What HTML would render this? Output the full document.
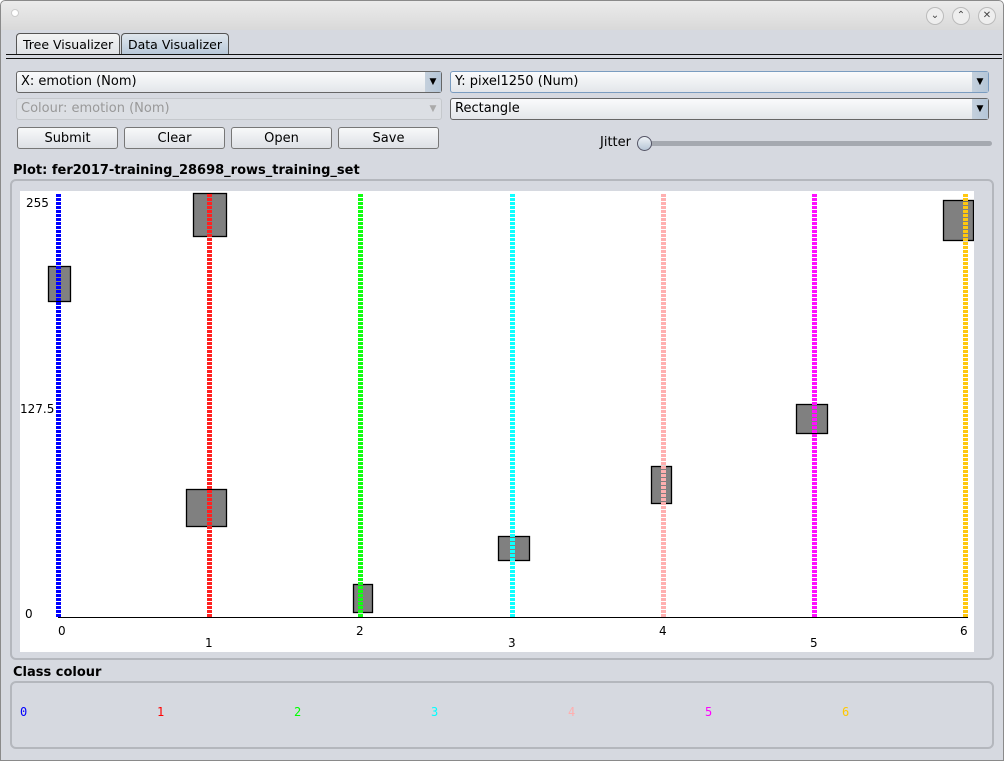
<!DOCTYPE html>
<html><head><style>
body{margin:0;width:1004px;height:761px;overflow:hidden;background:#fff;font-family:"DejaVu Sans","Liberation Sans",sans-serif;font-size:13px;}
.win{position:absolute;left:0;top:0;width:1004px;height:761px;border-radius:5px 5px 0 0;background:#d6d9e0;overflow:hidden}
.title{position:absolute;left:0;top:0;width:1004px;height:30px;background:linear-gradient(#ececec,#d9d9d9);}
.c{position:absolute;left:0;top:1px;width:1004px;height:760px}
.frame{position:absolute;left:0;top:0;width:1002px;height:759px;border:1px solid #8a8a8a;border-radius:5px 5px 0 0}
.cbtn{position:absolute;top:6px;width:16px;height:16px;border-radius:50%;border:1px solid #bbb;background:#eee;font-size:10px;text-align:center;line-height:16px;color:#444}
.tab{position:absolute;top:32px;height:20px;border:1px solid #555;border-bottom:none;border-radius:4px 4px 0 0;padding:0 6px;line-height:21px;font-size:12.5px}
.combo{position:absolute;height:22px;border:1px solid #666;border-radius:3px;background:linear-gradient(#fafbfc,#e3e6ea);box-sizing:border-box;line-height:20px;padding-left:4px;font-size:13px}
.combo .ar{position:absolute;right:0;top:0;width:16px;height:20px;background:linear-gradient(90deg,#c4d0dc,#b5c6d8);font-size:9px;text-align:center;line-height:20px}
.btn{position:absolute;top:126px;height:22px;width:101px;border:1px solid #777;border-radius:3px;background:linear-gradient(#f8f9fa,#dde0e5);box-sizing:border-box;text-align:center;line-height:21px}
.lbl{position:absolute;font-weight:bold;font-size:13px}
.panel{position:absolute;border:2px solid #b4b7bd;border-radius:6px;box-sizing:border-box}
</style></head><body><div class="win">
<div class="title"></div>
<div class="c">
<div style="position:absolute;left:11px;top:8px;width:6px;height:6px;border-radius:50%;background:#fff;border:1px solid #ccc"></div>
<div class="cbtn" style="left:926px">&#8964;</div><div class="cbtn" style="left:952px">&#8963;</div><div class="cbtn" style="left:978px">✕</div>
<div class="tab" style="left:16px;background:linear-gradient(#f4f4f4,#e0e2e6)">Tree Visualizer</div>
<div class="tab" style="left:121px;background:linear-gradient(#dfe6ee,#b9c9da)">Data Visualizer</div>
<div style="position:absolute;left:6px;top:53px;width:996px;height:1px;background:#111"></div>
<div style="position:absolute;left:6px;top:57px;width:996px;height:1px;background:#111"></div>
<div class="combo" style="left:16px;top:70px;width:426px">X: emotion (Nom)<div class="ar">▼</div></div>
<div class="combo" style="left:16px;top:97px;width:426px;color:#999;border-color:#c5c8cc;background:#dcdfe4">Colour: emotion (Nom)<div class="ar" style="background:none;color:#aaa">▼</div></div>
<div class="combo" style="left:450px;top:70px;width:539px;border-color:#7a9cc0">Y: pixel1250 (Num)<div class="ar">▼</div></div>
<div class="combo" style="left:450px;top:97px;width:539px">Rectangle<div class="ar">▼</div></div>
<div class="btn" style="left:17px">Submit</div><div class="btn" style="left:124px">Clear</div><div class="btn" style="left:231px">Open</div><div class="btn" style="left:338px">Save</div>
<div style="position:absolute;left:600px;top:134px">Jitter</div>
<div style="position:absolute;left:640px;top:140px;width:352px;height:5px;border-radius:3px;background:#a5a9b0"></div>
<div style="position:absolute;left:637px;top:135px;width:13px;height:13px;border-radius:50%;background:linear-gradient(#eef2f6,#b7c6d6);border:1px solid #556"></div>
<div class="lbl" style="left:13px;top:162px">Plot: fer2017-training_28698_rows_training_set</div>
<div class="panel" style="left:10px;top:178px;width:984px;height:481px"></div>
<svg style="position:absolute;left:20px;top:190px" width="954" height="461" font-family="DejaVu Sans" font-size="12">
<rect width="954" height="461" fill="#fff"/>
<g fill="#808080" stroke="#000" stroke-width="1.3">
<rect x="28.5" y="75.5" width="22" height="35"/><rect x="173.5" y="2.5" width="33" height="43"/><rect x="166.5" y="298.5" width="40" height="37"/>
<rect x="333.5" y="393.5" width="19" height="28"/><rect x="478.5" y="345.5" width="31" height="24"/><rect x="631.5" y="275.5" width="20" height="37"/>
<rect x="776.5" y="213.5" width="31" height="29"/><rect x="923.5" y="9.5" width="30" height="40"/></g>
<g stroke-width="5" stroke-dasharray="3 1"><line x1="38.5" y1="3" x2="38.5" y2="426" stroke="#0000ff"/><line x1="189.5" y1="3" x2="189.5" y2="426" stroke="#ff2020"/>
<line x1="340.5" y1="3" x2="340.5" y2="426" stroke="#10ff10"/><line x1="492.5" y1="3" x2="492.5" y2="426" stroke="#10ffff"/>
<line x1="643.5" y1="3" x2="643.5" y2="426" stroke="#ffb0b0"/><line x1="794.5" y1="3" x2="794.5" y2="426" stroke="#ff10ff"/>
<line x1="945.5" y1="3" x2="945.5" y2="426" stroke="#ffc810"/></g>
<line x1="38" y1="426.5" x2="948" y2="426.5" stroke="#000"/>
<text x="6" y="16">255</text><text x="0" y="222">127.5</text><text x="5" y="427">0</text>
<text x="38" y="444">0</text><text x="185" y="456">1</text><text x="336" y="444">2</text><text x="488" y="456">3</text><text x="639" y="444">4</text><text x="790" y="456">5</text><text x="940" y="444">6</text>
</svg>
<div class="lbl" style="left:13px;top:664px">Class colour</div>
<div class="panel" style="left:10px;top:680px;width:984px;height:68px"></div>
<div style="position:absolute;top:704px;font-family:'DejaVu Sans Mono',monospace;font-size:12px">
<span style="position:absolute;left:20px;color:#0000ff">0</span><span style="position:absolute;left:157px;color:#ff0000">1</span><span style="position:absolute;left:294px;color:#00ff00">2</span><span style="position:absolute;left:431px;color:#00ffff">3</span><span style="position:absolute;left:568px;color:#ffafaf">4</span><span style="position:absolute;left:705px;color:#ff00ff">5</span><span style="position:absolute;left:842px;color:#ffc800">6</span></div>
</div>
<div class="frame"></div>
</div></body></html>
